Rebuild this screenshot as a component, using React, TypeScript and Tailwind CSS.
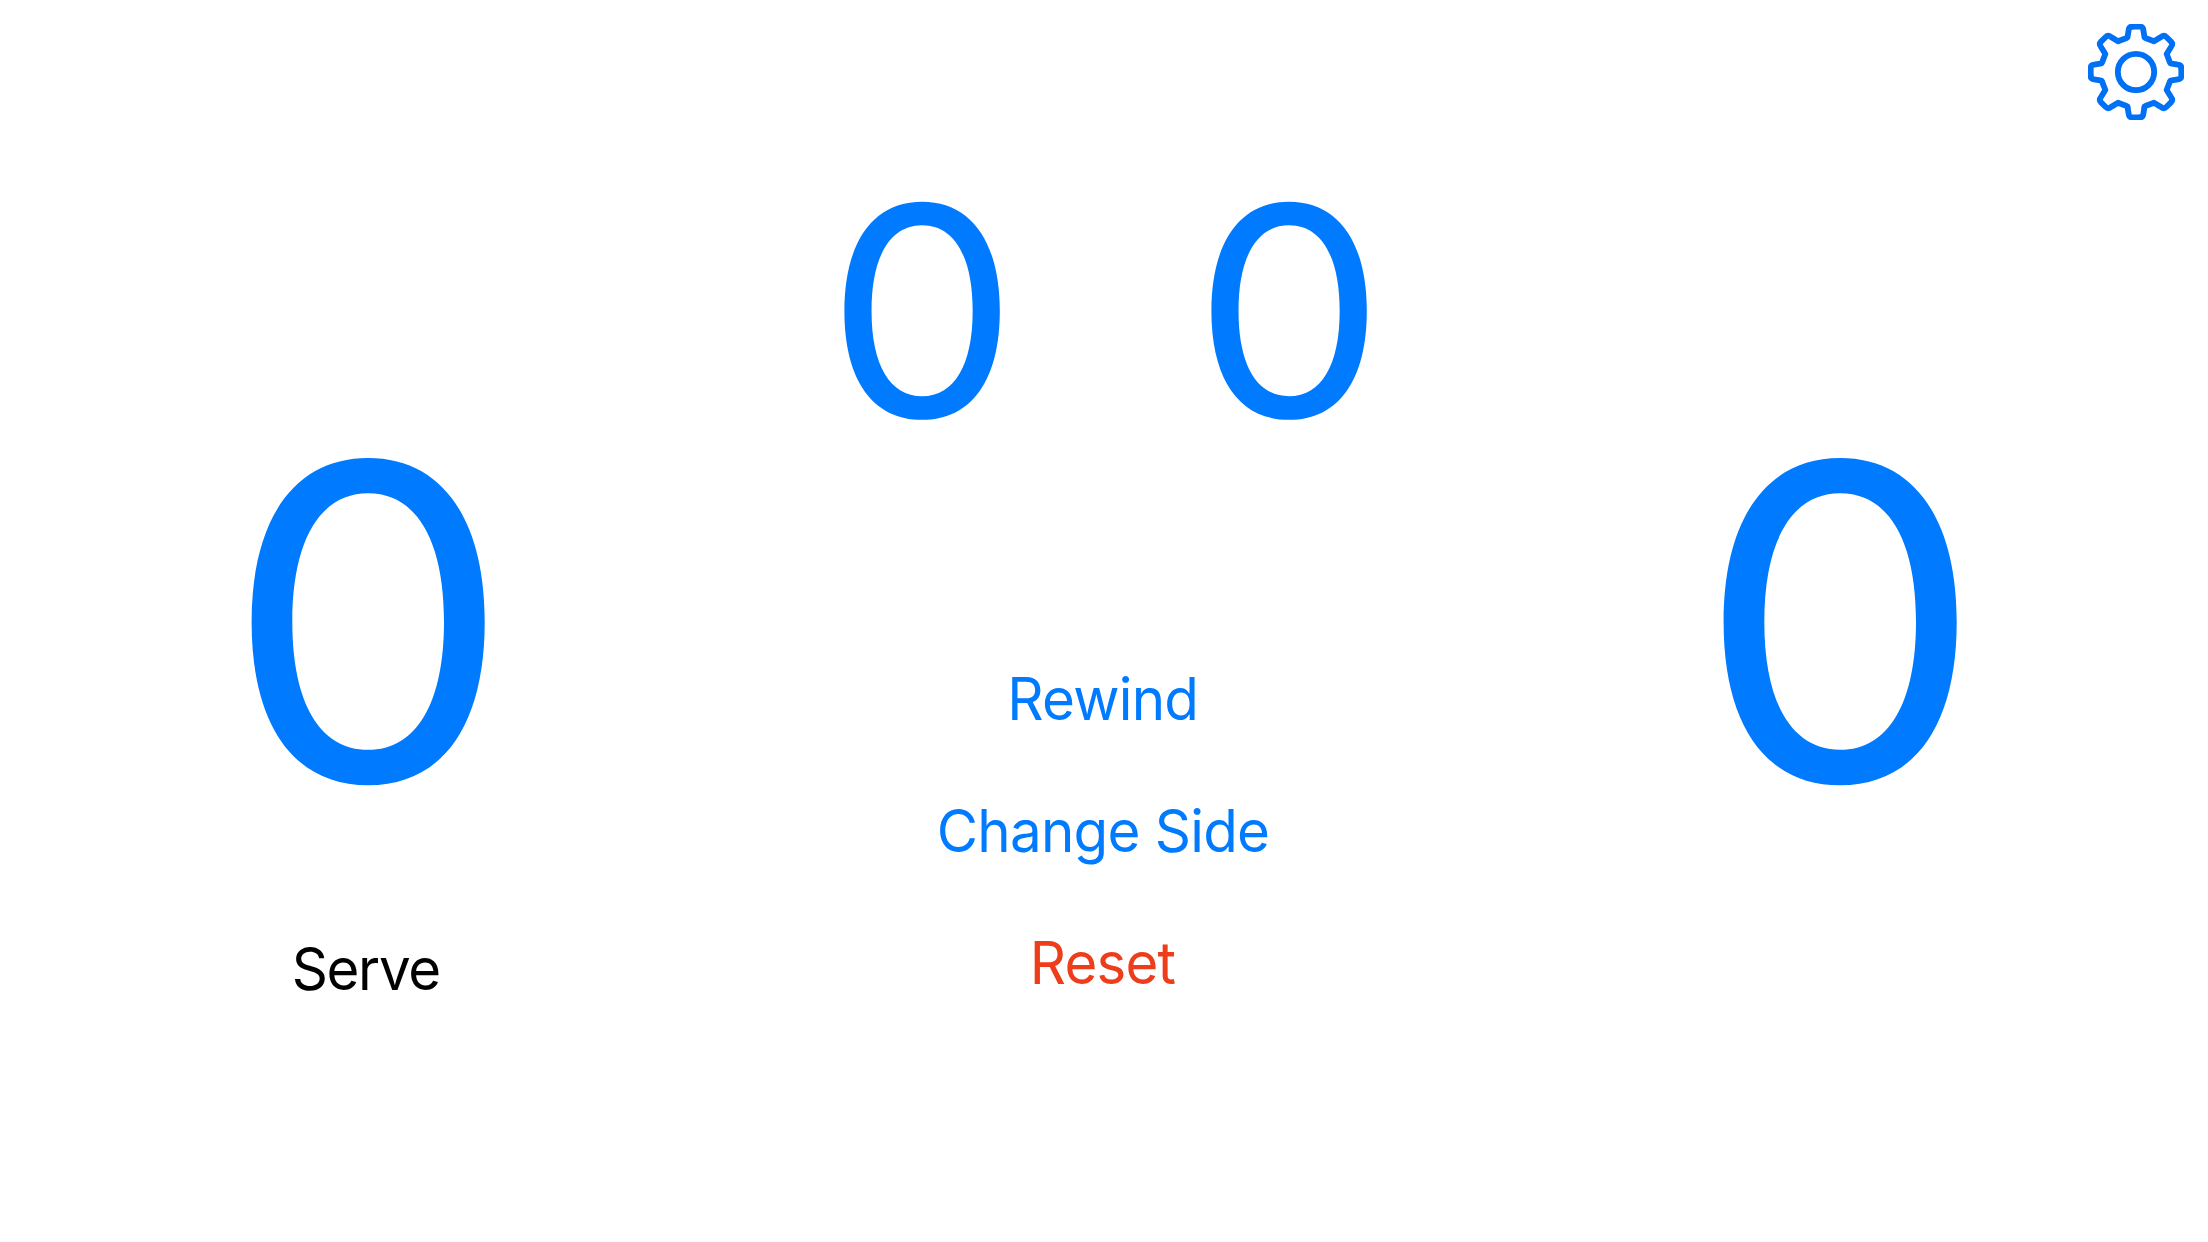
const TOOTH =
  "M-12 -136H12Q21 -136 22 -126L25 -107Q25 -103 28 -102L54 -92L75 -105Q84 -112 91 -105L105 -91Q112 -84 105 -75L92 -54L102 -28Q103 -25 107 -25L126 -22Q136 -21 136 -12";

function GearIcon() {
  return (
    <svg
      viewBox="-144 -144 288 288"
      className="size-24 text-[#0070f5]"
      fill="none"
      stroke="currentColor"
      strokeWidth="17.5"
      strokeLinejoin="round"
      strokeLinecap="round"
    >
      {[0, 90, 180, 270].map((angle) => (
        <path key={angle} d={TOOTH} transform={`rotate(${angle})`} />
      ))}
      <circle r="54.5" />
    </svg>
  );
}

export default function App() {
  return (
    <div className="flex h-[1242px] w-full flex-col overflow-hidden bg-white font-['Inter',sans-serif] text-[58.5px] leading-[72px] text-[#007aff]">
      <header className="flex h-36 shrink-0 justify-end pt-6 pr-6">
        <button aria-label="Settings" className="size-24">
          <GearIcon />
        </button>
      </header>

      <main className="grid flex-1 grid-cols-3">
        <section className="flex flex-col items-center pt-[253px]">
          <button className="scale-x-[1.04] text-[438px] leading-[450px]">0</button>
          <span className="mt-[86px] mr-[4px] scale-x-[0.965] font-[430] tracking-[-1.4px] text-black">Serve</span>
        </section>

        <section className="flex flex-col items-center pt-[17px]">
          <div className="grid w-full grid-cols-2 justify-items-center pl-[3px]">
            <button className="scale-x-[1.04] text-[292px] leading-[300px]">0</button>
            <button className="scale-x-[1.04] text-[292px] leading-[300px]">0</button>
          </div>
          <div className="mt-[202px] mr-[3px] flex flex-col items-center gap-[60px]">
            <button className="scale-x-[0.967] font-[430] tracking-[-0.8px]">Rewind</button>
            <button className="scale-x-[0.966] font-[430] tracking-[-0.8px]">Change Side</button>
            <button className="scale-x-[0.964] font-[430] tracking-[-0.8px] text-[#ee3d1a]">Reset</button>
          </div>
        </section>

        <section className="flex flex-col items-center pt-[253px]">
          <button className="scale-x-[1.04] text-[438px] leading-[450px]">0</button>
        </section>
      </main>
    </div>
  );
}
